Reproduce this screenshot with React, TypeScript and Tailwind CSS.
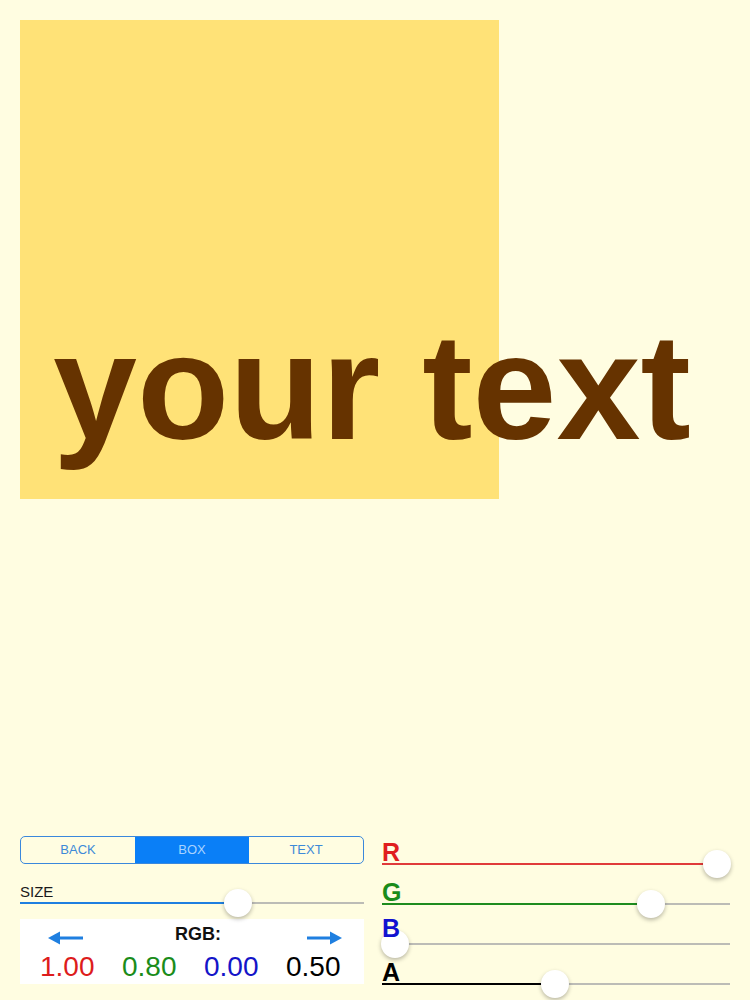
import React from 'react';

// Colour editor preview: box + text, with mode switch and RGBA sliders
const font = { fontFamily: '"Liberation Sans", Arial, Helvetica, sans-serif' };

function Thumb({ pct }: { pct: number }) {
  return (
    <div
      className="absolute top-1/2 w-[28px] h-[28px] -translate-x-1/2 -translate-y-1/2 rounded-full bg-white shadow-[0_2px_4px_rgba(0,0,0,0.28)]"
      style={{ left: `${pct}%` }}
    />
  );
}

function Slider({ pct, fill, thumbPct }: { pct: number; fill: string; thumbPct?: number }) {
  return (
    <div className="relative h-[2px] w-full bg-[#bcbcb6]">
      <div className={`absolute left-0 top-0 h-full ${fill}`} style={{ width: `${pct}%` }} />
      <Thumb pct={thumbPct ?? pct} />
    </div>
  );
}

function Arrow({ dir }: { dir: 'left' | 'right' }) {
  return (
    <svg width="35" height="14" viewBox="0 0 35 14" className="mt-[6px]">
      {dir === 'left' ? (
        <>
          <polygon points="0,7 12,0.5 12,13.5" fill="#1f7fe0" />
          <rect x="10" y="5.5" width="25" height="3" fill="#1f7fe0" />
        </>
      ) : (
        <>
          <polygon points="35,7 23,0.5 23,13.5" fill="#1f7fe0" />
          <rect x="0" y="5.5" width="25" height="3" fill="#1f7fe0" />
        </>
      )}
    </svg>
  );
}

const channels = [
  { label: 'R', text: 'text-[#e01e1e]', fill: 'bg-[#e03a3a]', pct: 96.3, lift: '' },
  { label: 'G', text: 'text-[#1a8c1a]', fill: 'bg-[#1e8c1e]', pct: 77.3, lift: '' },
  { label: 'B', text: 'text-[#1212d0]', fill: 'bg-[#1212d0]', pct: 3.7, lift: 'mb-[4px] -mt-[4px]' },
  { label: 'A', text: 'text-black', fill: 'bg-black', pct: 49.7, lift: '' },
];

export default function App() {
  return (
    <div className="w-[750px] h-[1000px] bg-[#fffde1] overflow-hidden" style={font}>
      {/* Preview */}
      <div className="relative ml-[20px] mt-[20px] w-[479px] h-[479px] bg-[#ffe277]">
        <div className="absolute left-[33px] top-[291px] whitespace-nowrap text-[151px] leading-none font-bold text-[#663300]">
          your text
        </div>
      </div>

      {/* Controls */}
      <div className="mt-[337px] flex px-[20px]">
        <div className="w-[344px] flex flex-col">
          <div className="flex h-[28px] rounded-[5px] border border-[#3a88dc] overflow-hidden text-[13px]">
            <div className="flex-1 flex items-center justify-center text-[#3d8ad8]">BACK</div>
            <div className="flex-1 flex items-center justify-center bg-[#0a7ff7] text-[#a9d3ff]">BOX</div>
            <div className="flex-1 flex items-center justify-center text-[#3d8ad8]">TEXT</div>
          </div>

          <div className="mt-[19px] text-[15px] leading-[18px] text-[#1a1a1a]">SIZE</div>
          <div className="mt-[1px]">
            <Slider pct={62.5} fill="bg-[#1f7fe0]" thumbPct={63.4} />
          </div>

          <div className="mt-[15px] h-[65px] bg-white flex flex-col">
            <div className="flex items-start justify-between pl-[28px] pr-[22px] pt-[6px]">
              <Arrow dir="left" />
              <div className="text-[18px] leading-[18px] font-bold text-[#111] pl-[6px]">RGB:</div>
              <Arrow dir="right" />
            </div>
            <div className="mt-[8px] flex gap-[27.5px] pl-[20px] text-[28px] leading-[28px]">
              <span className="text-[#dd1c1c]">1.00</span>
              <span className="text-[#1a8c1a]">0.80</span>
              <span className="text-[#1414c8]">0.00</span>
              <span className="text-black">0.50</span>
            </div>
          </div>
        </div>

        <div className="ml-[18px] w-[348px] pt-[5px] flex flex-col gap-[16px]">
          {channels.map((c) => (
            <div key={c.label}>
              <div className={`relative z-10 text-[25px] leading-[22px] font-bold ${c.text} ${c.lift}`}>{c.label}</div>
              <Slider pct={c.label === 'B' ? 0 : c.pct} fill={c.fill} thumbPct={c.pct} />
            </div>
          ))}
        </div>
      </div>
    </div>
  );
}
